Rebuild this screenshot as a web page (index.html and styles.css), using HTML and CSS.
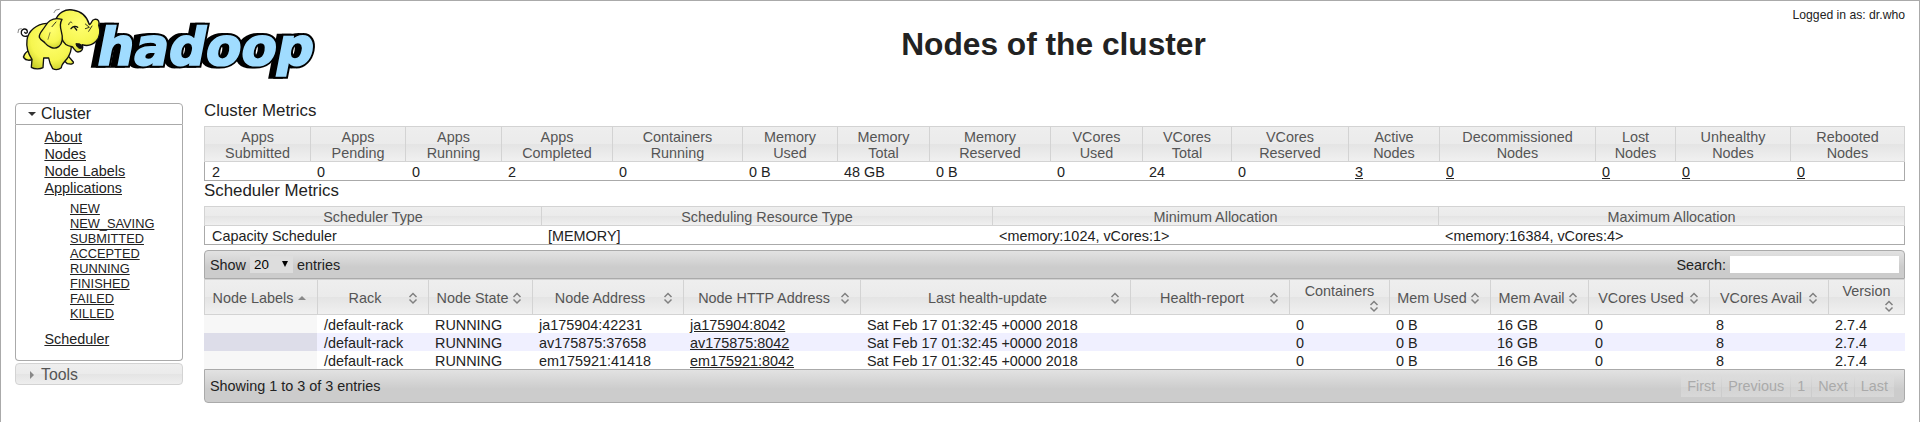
FILE: index.html
```html
<!DOCTYPE html>
<html lang="en">
<head>
<meta charset="utf-8">
<title>Nodes of the cluster</title>
<link rel="stylesheet" href="styles.css">
</head>
<body>
<svg class="defs" width="0" height="0" aria-hidden="true">
  <symbol id="sort" viewBox="0 0 16 16"><path d="M4.5 7 8 3.500 11.500 7M4.500 9.500 8 13 11.500 9.500" fill="none" stroke="#808080" stroke-width="1.500"/></symbol>
  <symbol id="asc" viewBox="0 0 16 16"><path d="M4 10 8 6 12 10Z" fill="#888"/></symbol>
</svg>
<div class="page">
  <header class="header">
    <svg class="logo" viewBox="45 0 915 270" role="img" aria-label="Hadoop logo">
      <defs>
        <radialGradient id="skin" cx="55%" cy="35%" r="70%"><stop offset="0" stop-color="#ffff72"/><stop offset=".65" stop-color="#f6f650"/><stop offset="1" stop-color="#c9cf2a"/></radialGradient>
      </defs>
      <g class="wordmark" transform="translate(284 195) skewX(-11)">
        <text class="wordmark-shadow" x="-15" y="0" textLength="650" lengthAdjust="spacingAndGlyphs">hadoop</text>
        <text class="wordmark-edge" x="0" y="0" textLength="650" lengthAdjust="spacingAndGlyphs">hadoop</text>
        <text class="wordmark-face" x="0" y="0" textLength="650" lengthAdjust="spacingAndGlyphs">hadoop</text>
      </g>
      <g fill="url(#skin)" stroke="#111" stroke-width="4" stroke-linejoin="round" stroke-linecap="round">
        <path d="M82 108C70 112 62 104 64 95C67 85 80 84 82 94C83 100 76 102 74 97" fill="none" stroke-width="4"/>
        <path d="M88 150C76 158 68 168 72 174C78 182 90 182 98 178Z"/>
        <path d="M196 158L220 186C222 192 214 194 202 191L188 178Z"/>
        <path d="M140 70C110 72 84 92 81 120C78 142 84 160 96 178L94 202C104 208 120 208 129 203L131 174L146 174C148 186 152 196 158 206C168 211 178 208 184 203C184 192 196 184 204 172C212 160 214 148 214 136L190 80Z"/>
        <path d="M166 62C174 38 196 26 218 30C246 34 262 52 268 74C276 72 272 60 284 58C296 56 299 66 296 76C302 92 300 112 288 124C274 138 258 138 246 134C252 144 246 156 234 156C224 154 222 144 216 140C200 138 190 130 186 116Z"/>
        <path d="M228 132C230 142 238 148 246 144C247 138 244 134 240 132Z" fill="#111" stroke-width="3"/>
        <path d="M186 58C164 52 146 60 136 78C128 92 116 100 118 112C122 122 130 122 136 130C144 140 162 150 176 140C190 128 188 108 184 94C180 80 180 68 186 58Z"/>
        <path d="M206 74C208 66 212 64 216 68M256 72L268 82L256 86M266 94L276 78M168 66L156 80" fill="none" stroke-width="2.500"/>
        <path d="M213 86C219 78 228 78 233 82M222 80L230 90" fill="none" stroke-width="4"/>
        <path d="M162 38L167 30 178 28M54 98L56 88 64 86M150 98L144 118" fill="none" stroke-width="1.500"/>
      </g>
    </svg>
    <h1 class="title">Nodes of the cluster</h1>
    <div class="user">Logged in as: dr.who</div>
  </header>

  <div class="columns">
    <nav class="nav">
      <h3 class="nav-head open"><svg class="tri" viewBox="0 0 16 16"><path d="M4 6H12L8 10Z" fill="#333"/></svg>Cluster</h3>
      <div class="nav-body">
        <ul class="links">
          <li><a>About</a></li>
          <li><a>Nodes</a></li>
          <li><a>Node Labels</a></li>
          <li><a>Applications</a>
            <ul class="states">
              <li><a>NEW</a></li>
              <li><a>NEW_SAVING</a></li>
              <li><a>SUBMITTED</a></li>
              <li><a>ACCEPTED</a></li>
              <li><a>RUNNING</a></li>
              <li><a>FINISHED</a></li>
              <li><a>FAILED</a></li>
              <li><a>KILLED</a></li>
            </ul>
          </li>
          <li><a>Scheduler</a></li>
        </ul>
      </div>
      <h3 class="nav-head closed"><svg class="tri" viewBox="0 0 16 16"><path d="M6 4V12L10 8Z" fill="#888"/></svg>Tools</h3>
    </nav>

    <main class="main">
      <h3 class="section first">Cluster Metrics</h3>
      <table class="grid metrics">
        <colgroup><col style="width:106px"><col style="width:95px"><col style="width:96px"><col style="width:111px"><col style="width:130px"><col style="width:95px"><col style="width:92px"><col style="width:121px"><col style="width:92px"><col style="width:89px"><col style="width:117px"><col style="width:91px"><col style="width:156px"><col style="width:80px"><col style="width:115px"><col style="width:115px"></colgroup>
        <thead><tr><th>Apps<br>Submitted</th><th>Apps<br>Pending</th><th>Apps<br>Running</th><th>Apps<br>Completed</th><th>Containers<br>Running</th><th>Memory<br>Used</th><th>Memory<br>Total</th><th>Memory<br>Reserved</th><th>VCores<br>Used</th><th>VCores<br>Total</th><th>VCores<br>Reserved</th><th>Active<br>Nodes</th><th>Decommissioned<br>Nodes</th><th>Lost<br>Nodes</th><th>Unhealthy<br>Nodes</th><th>Rebooted<br>Nodes</th></tr></thead>
        <tbody><tr><td>2</td><td>0</td><td>0</td><td>2</td><td>0</td><td>0 B</td><td>48 GB</td><td>0 B</td><td>0</td><td>24</td><td>0</td><td><a>3</a></td><td><a>0</a></td><td><a>0</a></td><td><a>0</a></td><td><a>0</a></td></tr></tbody>
      </table>

      <h3 class="section">Scheduler Metrics</h3>
      <table class="grid metrics single">
        <colgroup><col style="width:337px"><col style="width:451px"><col style="width:446px"><col style="width:467px"></colgroup>
        <thead><tr><th>Scheduler Type</th><th>Scheduling Resource Type</th><th>Minimum Allocation</th><th>Maximum Allocation</th></tr></thead>
        <tbody><tr><td>Capacity Scheduler</td><td>[MEMORY]</td><td>&lt;memory:1024, vCores:1&gt;</td><td>&lt;memory:16384, vCores:4&gt;</td></tr></tbody>
      </table>

      <div class="bar top">
        <div class="length">Show <span class="select">20<svg class="caret" viewBox="0 0 6 6"><path d="M0 0H6L3 6Z"/></svg></span> entries</div>
        <label class="search">Search: <input class="search-box" type="text"></label>
      </div>
      <table class="grid nodes">
        <colgroup><col style="width:113px"><col style="width:111px"><col style="width:104px"><col style="width:151px"><col style="width:177px"><col style="width:270px"><col style="width:159px"><col style="width:100px"><col style="width:101px"><col style="width:98px"><col style="width:121px"><col style="width:119px"><col style="width:77px"></colgroup>
        <thead><tr>
          <th><div class="sorter"><span>Node Labels</span><svg><use href="#asc"/></svg></div></th>
          <th><div class="sorter"><span>Rack</span><svg><use href="#sort"/></svg></div></th>
          <th><div class="sorter"><span>Node State</span><svg><use href="#sort"/></svg></div></th>
          <th><div class="sorter"><span>Node Address</span><svg><use href="#sort"/></svg></div></th>
          <th><div class="sorter"><span>Node HTTP Address</span><svg><use href="#sort"/></svg></div></th>
          <th><div class="sorter"><span>Last health-update</span><svg><use href="#sort"/></svg></div></th>
          <th><div class="sorter"><span>Health-report</span><svg><use href="#sort"/></svg></div></th>
          <th><div class="sorter stacked"><span>Containers</span><svg><use href="#sort"/></svg></div></th>
          <th><div class="sorter"><span>Mem Used</span><svg><use href="#sort"/></svg></div></th>
          <th><div class="sorter"><span>Mem Avail</span><svg><use href="#sort"/></svg></div></th>
          <th><div class="sorter"><span>VCores Used</span><svg><use href="#sort"/></svg></div></th>
          <th><div class="sorter"><span>VCores Avail</span><svg><use href="#sort"/></svg></div></th>
          <th><div class="sorter stacked"><span>Version</span><svg><use href="#sort"/></svg></div></th>
        </tr></thead>
        <tbody>
          <tr><td></td><td>/default-rack</td><td>RUNNING</td><td>ja175904:42231</td><td><a>ja175904:8042</a></td><td>Sat Feb 17 01:32:45 +0000 2018</td><td></td><td>0</td><td>0 B</td><td>16 GB</td><td>0</td><td>8</td><td>2.7.4</td></tr>
          <tr><td></td><td>/default-rack</td><td>RUNNING</td><td>av175875:37658</td><td><a>av175875:8042</a></td><td>Sat Feb 17 01:32:45 +0000 2018</td><td></td><td>0</td><td>0 B</td><td>16 GB</td><td>0</td><td>8</td><td>2.7.4</td></tr>
          <tr><td></td><td>/default-rack</td><td>RUNNING</td><td>em175921:41418</td><td><a>em175921:8042</a></td><td>Sat Feb 17 01:32:45 +0000 2018</td><td></td><td>0</td><td>0 B</td><td>16 GB</td><td>0</td><td>8</td><td>2.7.4</td></tr>
        </tbody>
      </table>
      <div class="bar bottom">
        <div>Showing 1 to 3 of 3 entries</div>
        <div class="pager"><span>First</span><span>Previous</span><span>1</span><span>Next</span><span>Last</span></div>
      </div>
    </main>
  </div>
</div>
</body>
</html>
```
FILE: styles.css
```css
* { box-sizing: border-box; }
html, body { height: 100%; }
body {
  margin: 0;
  overflow: hidden;
  font-family: "Liberation Sans", Arial, sans-serif;
  font-size: 14.4px;
  line-height: 16px;
  color: #222;
  background: #fff;
}
.defs { display: none; }
.page {
  height: 100%;
  padding: 0 14px;
  border: 1px solid #aaa;
  border-bottom: 0;
}
.header {
  display: grid;
  grid-template-columns: 189px 1fr;
  height: 99px;
}
.logo {
  grid-area: 1 / 1;
  width: 305px;
  height: 90px;
  margin-top: -1px;
  overflow: visible;
}
.wordmark {
  font-family: "DejaVu Sans", sans-serif;
  font-weight: bold;
  font-size: 156px;
  stroke-linejoin: miter;
}
.wordmark-shadow { fill: #000; stroke: #000; stroke-width: 17px; }
.wordmark-edge { fill: #000; stroke: #000; stroke-width: 17px; }
.wordmark-face { fill: #a0dcff; stroke: #a0dcff; stroke-width: 5px; }
.title {
  grid-area: 1 / 2;
  margin: 25px 2px 0 0;
  font-size: 31.7px;
  line-height: 36px;
  text-align: center;
}
.user {
  grid-area: 1 / 2;
  justify-self: end;
  margin-top: 6px;
  font-size: 12.2px;
  height: 16px;
}
.columns {
  display: grid;
  grid-template-columns: 168px 1fr;
  column-gap: 21px;
}
a { color: #222; text-decoration: underline; }

.nav { padding-top: 3px; }
.nav-head {
  display: flex;
  align-items: center;
  height: 22px;
  margin: 0;
  padding-left: 8px;
  border: 1px solid #aaa;
  font-size: 15.84px;
  font-weight: normal;
}
.tri { width: 16px; height: 16px; margin-right: 1px; }
.open { border-radius: 4px 4px 0 0; }
.closed {
  margin-top: 2px;
  padding-top: 1px;
  border-color: #d3d3d3;
  border-radius: 4px;
  color: #555;
  background: linear-gradient(#eee, #ebebeb 50%, #e4e4e4 50%, #eee);
}
.nav-body {
  height: 236px;
  padding: 4px 0 0 28.4px;
  border: 1px solid #aaa;
  border-top: 0;
  border-radius: 0 0 4px 4px;
}
.links, .states { margin: 0; padding: 0; list-style: none; }
.links { font-size: 14.4px; line-height: 17px; }
.states {
  padding: 4px 0 10px 25.6px;
  font-size: 12.8px;
  line-height: 15px;
}

.section {
  height: 25px;
  margin: 0;
  padding-top: 1px;
  font-size: 16.85px;
  font-weight: normal;
  line-height: 18px;
}
.first { height: 26px; padding-top: 2px; }
.grid {
  width: 1701px;
  table-layout: fixed;
  border-collapse: separate;
  border-spacing: 0;
}
th {
  height: 36px;
  padding: 2px 0 0;
  border: 1px solid #d3d3d3;
  border-right: 0;
  font-weight: normal;
  color: #555;
  background: linear-gradient(#eee, #ebebeb 50%, #e4e4e4 50%, #f0f0f0);
}
th:last-child { border-right: 1px solid #d3d3d3; }
td { height: 18px; padding: 2px 0 0 7px; white-space: nowrap; }
.metrics td { height: 19px; border-bottom: 1px solid #aaa; }
.metrics td:first-child { border-left: 1px solid #aaa; }
.metrics td:last-child { border-right: 1px solid #aaa; }
.single th { height: 20px; }

.bar {
  display: flex;
  align-items: center;
  justify-content: space-between;
  padding: 0 5px;
  border: 1px solid #aaa;
  background: linear-gradient(#e2e2e2, #ccc 60%, #ccc);
}
.top { height: 29px; margin-top: 5px; border-radius: 4px 4px 0 0; }
.bottom { height: 34px; border-radius: 0 0 4px 4px; }
.length { display: flex; align-items: center; gap: 4px; }
.select {
  display: flex;
  align-items: center;
  justify-content: space-between;
  width: 43px;
  height: 17px;
  padding: 0 5px 0 4px;
  font-size: 13.33px;
  color: #000;
  background: #ddd;
}
.caret { width: 6px; height: 6px; margin-top: -2px; }
.search { display: flex; align-items: center; gap: 4px; }
.search-box {
  width: 169px;
  height: 17px;
  padding: 0;
  border: 0;
  background: #fff;
}
.nodes td:first-child { background: #f7f7f7; }
.nodes tr:nth-child(2) td { background: #f0f0ff; }
.nodes tr:nth-child(2) td:first-child { background: #dddde9; }
.sorter {
  display: flex;
  align-items: center;
  padding: 0 7px;
  white-space: nowrap;
}
.sorter span { flex: 1; text-align: center; }
.sorter svg { flex: none; width: 16px; height: 16px; margin-top: -1px; }
.stacked { flex-direction: column; }
.stacked svg { align-self: flex-end; }
.pager { display: flex; gap: 1px; margin-right: 5px; }
.pager span {
  height: 21px;
  padding: 2px 6px 0;
  color: #aaa;
  background: linear-gradient(#dcdcdc, #d8d8d8 50%, #d3d3d3 50%, #d8d8d8);
}
```
